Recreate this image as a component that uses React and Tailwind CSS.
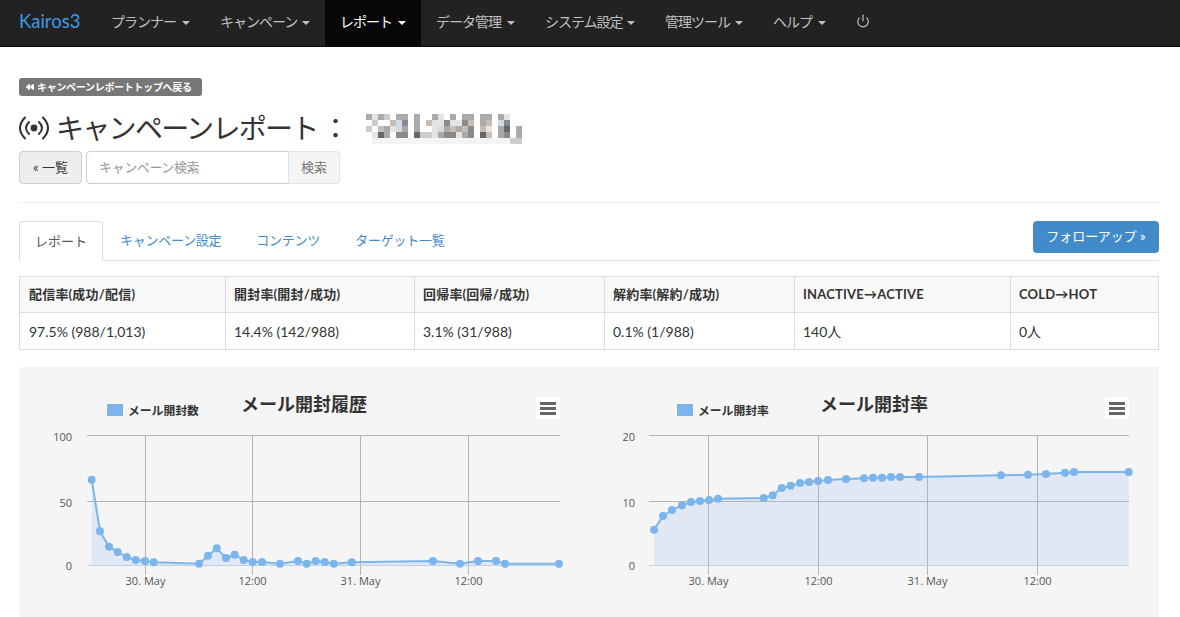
import { Power } from 'lucide-react';
import { FaBackward } from 'react-icons/fa';

const navItems = [
  { label: 'プランナー', width: 'w-[109px]' },
  { label: 'キャンペーン', width: 'w-[120px]' },
  { label: 'レポート', width: 'w-[96px]', active: true },
  { label: 'データ管理', width: 'w-[109px]' },
  { label: 'システム設定', width: 'w-[120px]' },
  { label: '管理ツール', width: 'w-[108px]' },
  { label: 'ヘルプ', width: 'w-[83px]' },
];

const headers = ['配信率(成功/配信)', '開封率(開封/成功)', '回帰率(回帰/成功)', '解約率(解約/成功)', 'INACTIVE→ACTIVE', 'COLD→HOT'];
const values = ['97.5% (988/1,013)', '14.4% (142/988)', '3.1% (31/988)', '0.1% (1/988)', '140人', '0人'];

// chart points, in page coordinates
const openCount = [
  [91.7, 479.7], [100, 531.3], [109, 546.7], [117.7, 552], [126.7, 557], [135.7, 560], [145, 561], [153.7, 562.3],
  [199, 563.7], [208, 555.7], [216.7, 548.3], [226, 558], [234.7, 554.7], [243.7, 560], [252.7, 562], [262, 562],
  [280, 563.7], [298, 561], [306.7, 563.7], [315.7, 561], [324.7, 562], [333.7, 563.7], [351.7, 562.3], [433, 561],
  [460, 563.7], [478, 561], [496, 561], [505, 563.7], [559, 563.7],
];
const openRate = [
  [654, 529.7], [663, 516], [672, 510], [682, 505.3], [691, 502], [700, 501], [709, 500], [718, 498.7],
  [763.7, 498], [772.7, 495.3], [781.7, 488], [790.7, 485.7], [800, 483], [809, 482], [818, 481], [828, 480],
  [846, 479], [864, 478.3], [873, 477.7], [882, 477.7], [891, 477], [900, 477], [919, 477], [1001, 475.3],
  [1028, 474.7], [1046, 474], [1065, 472.7], [1074, 472], [1128.7, 472],
];

const chartFont = { fontFamily: '"Open Sans", "Noto Sans CJK JP", sans-serif' };

function Chart({ originX, left, right, points, yLabels, labelX, verticals, legend, legendX, title, titleX, menuX }) {
  const line = points.map(p => p.join(',')).join(' ');
  const first = points[0];
  const last = points[points.length - 1];
  const area = `${first[0]},565 ${line} ${last[0]},565`;
  const xLabels = ['30. May', '12:00', '31. May', '12:00'];
  return (
    <svg width="570" height="250" viewBox={`${originX} 367 570 250`} className="block" style={chartFont}>
      <polygon points={area} fill="#dfe8f4" />
      {[435.5, 501.5].map(y => (
        <line key={y} x1={left} x2={right} y1={y} y2={y} stroke="#b4b4b4" />
      ))}
      {verticals.map(x => (
        <line key={x} x1={x} x2={x} y1={435} y2={575} stroke="#b4b4b4" />
      ))}
      <line x1={left} x2={right} y1={565.5} y2={565.5} stroke="#c0d0e0" />
      <polyline points={line} fill="none" stroke="#7cb5ec" strokeWidth="2" />
      {points.map(p => (
        <circle key={p[0]} cx={p[0]} cy={p[1]} r="4" fill="#7cb5ec" />
      ))}
      {yLabels.map(([text, y]) => (
        <text key={text} x={labelX} y={y} textAnchor="end" fontSize="11" fill="#555">{text}</text>
      ))}
      {verticals.map((x, i) => (
        <text key={x} x={x} y={585} textAnchor="middle" fontSize="11" fill="#555">{xLabels[i]}</text>
      ))}
      <rect x={legendX} y="404" width="16" height="12" fill="#7cb5ec" />
      <text x={legendX + 21} y="414.5" fontSize="11.8" fontWeight="700" fill="#333">{legend}</text>
      <text x={titleX} y="411" fontSize="18" fontWeight="700" fill="#333">{title}</text>
      <rect x={menuX} y="397" width="24" height="22" fill="#fff" />
      <rect x={menuX + 4} y="402" width="16" height="3" fill="#666" />
      <rect x={menuX + 4} y="407" width="16" height="3" fill="#666" />
      <rect x={menuX + 4} y="412" width="16" height="3" fill="#666" />
    </svg>
  );
}

// pixelated campaign name, one letter per 6px cell
const mosaicColors = {
  '.': '#ffffff', f: '#f4f4f4', a: '#e4e4e4', b: '#cccccc', c: '#aaaaaa', d: '#8a8a8a', e: '#666666', t: '#c8bdb4', u: '#cfdce6',
};
const mosaic = [
  'cacb.cc.c..ca.c.cc.cc.ca..',
  '.b..tud.c.taadaadt.ct.ud..',
  'b.tcauc.c..auctctd.ta.ce.c',
  '.aec.dd.ebbacddacd.et.cd.c',
  '.fffffffffffffffffffffffbb',
];

function Mosaic() {
  return (
    <svg width="156" height="30" viewBox="0 0 156 30" className="block">
      {mosaic.map((row, y) => row.split('').map((cell, x) => (
        <rect key={`${x}-${y}`} x={x * 6} y={y * 6} width="6" height="6" fill={mosaicColors[cell]} />
      )))}
    </svg>
  );
}

export default function App() {
  return (
    <div className="h-[617px] w-[1180px] overflow-hidden bg-white font-['Lato','Noto_Sans_CJK_JP',sans-serif] text-[13px] text-[#333]">
      {/* navbar */}
      <nav className="flex h-[47px] items-stretch border-b border-[#080808] bg-[#222]">
        <a className="flex w-[96px] items-center pb-[2px] pl-[19px] text-[18.5px] text-[#3b9be6]">Kairos3</a>
        {navItems.map(item => (
          <a
            key={item.label}
            className={`flex items-center justify-between px-[15px] pb-[3px] text-[14px] tracking-[-1px] ${item.width} ${item.active ? 'bg-[#080808] text-white' : 'text-[#c0c0c0]'}`}
          >
            {item.label}
            <span className="mt-[3px] h-0 w-0 border-x-4 border-t-4 border-x-transparent border-t-current" />
          </a>
        ))}
        <a className="flex items-center px-[15px] pb-[5px] text-[#c0c0c0]">
          <Power size={14} strokeWidth={2} />
        </a>
      </nav>

      <div className="pl-[19px] pr-[21px]">
        {/* back link and heading */}
        <div className="pt-[31px]">
          <a className="flex h-[18px] w-[183px] items-center gap-[3px] rounded-[3px] bg-[#777] pl-[7px] text-[10px] font-bold tracking-[-0.3px] text-white">
            <FaBackward size={8} />
            キャンペーンレポートトップへ戻る
          </a>
        </div>
        <div className="mt-[13px] flex h-[37px] items-center">
          <svg width="31" height="24" viewBox="0 0 31 24" fill="none" stroke="#333" strokeWidth="2" strokeLinecap="round">
            <circle cx="15" cy="12" r="3.4" fill="#333" stroke="none" />
            <path d="M10 6 Q4 12 10 18" />
            <path d="M20 6 Q26 12 20 18" />
            <path d="M6 1.5 Q-4 12 6 22.5" />
            <path d="M24 1.5 Q34 12 24 22.5" />
          </svg>
          <h1 className="ml-[6px] w-[310px] text-[28px] font-normal tracking-[-1.7px]">
            キャンペーンレポート<span className="ml-[4px]">：</span>
          </h1>
          <div className="mt-[3px] blur-[0.5px]">
            <Mosaic />
          </div>
        </div>

        {/* campaign search */}
        <div className="mt-[5px] flex h-[33px] items-stretch">
          <a className="flex w-[63px] items-center justify-center rounded-[4px] border border-[#ccc] bg-[#eee] text-[13px]">« 一覧</a>
          <input
            placeholder="キャンペーン検索"
            className="ml-[4px] w-[203px] rounded-l-[4px] border border-[#ccc] px-[12px] text-[13px] tracking-[-0.4px] outline-none placeholder:text-[#999]"
          />
          <span className="-ml-px flex w-[52px] items-center justify-center rounded-r-[4px] border border-[#e3e3e3] bg-[#f5f5f5] text-[13px] text-[#777]">検索</span>
        </div>

        <hr className="mt-[18px] border-[#eee]" />

        {/* tabs */}
        <div className="mt-[18px] flex h-[40px] items-start border-b border-[#ddd]">
          <a className="-mb-px flex h-[40px] w-[84px] items-center justify-center rounded-t-[4px] border border-b-0 border-[#ddd] bg-white text-[#555]">レポート</a>
          <a className="ml-[17px] flex h-[40px] items-center tracking-[-0.25px] text-[#428bca]">キャンペーン設定</a>
          <a className="ml-[35px] flex h-[40px] items-center tracking-[-0.25px] text-[#428bca]">コンテンツ</a>
          <a className="ml-[35px] flex h-[40px] items-center tracking-[-0.25px] text-[#428bca]">ターゲット一覧</a>
          <a className="ml-auto flex h-[32px] w-[126px] items-center justify-center rounded-[4px] bg-[#428bca] text-white">フォローアップ »</a>
        </div>

        {/* summary table */}
        <table className="mt-[15px] w-[1139px] table-fixed border-collapse">
          <colgroup>
            <col className="w-[206px]" />
            <col className="w-[189px]" />
            <col className="w-[190px]" />
            <col className="w-[190px]" />
            <col className="w-[216px]" />
            <col className="w-[148px]" />
          </colgroup>
          <thead>
            <tr className="h-[36px] bg-[#f9f9f9]">
              {headers.map(text => (
                <th key={text} className="border border-[#ddd] pl-[8px] text-left font-bold tracking-[0.2px] first:pl-[9px]">{text}</th>
              ))}
            </tr>
          </thead>
          <tbody>
            <tr className="h-[37px]">
              {values.map(text => (
                <td key={text} className="border border-[#ddd] pl-[8px] text-[14px] first:pl-[9px]">{text}</td>
              ))}
            </tr>
          </tbody>
        </table>

        {/* charts */}
        <div className="mt-[17px] flex h-[250px] bg-[#f5f5f5]">
          <Chart
            originX={19} left={87} right={560} points={openCount}
            yLabels={[['100', 441], ['50', 507], ['0', 570]]} labelX={72}
            verticals={[145.5, 252.5, 360.5, 468.5]}
            legend="メール開封数" legendX={107} title="メール開封履歴" titleX={241} menuX={536}
          />
          <Chart
            originX={589} left={649} right={1129} points={openRate}
            yLabels={[['20', 441], ['10', 507], ['0', 570]]} labelX={635}
            verticals={[708.5, 818.5, 927.5, 1037.5]}
            legend="メール開封率" legendX={677} title="メール開封率" titleX={820} menuX={1105}
          />
        </div>
      </div>
    </div>
  );
}
